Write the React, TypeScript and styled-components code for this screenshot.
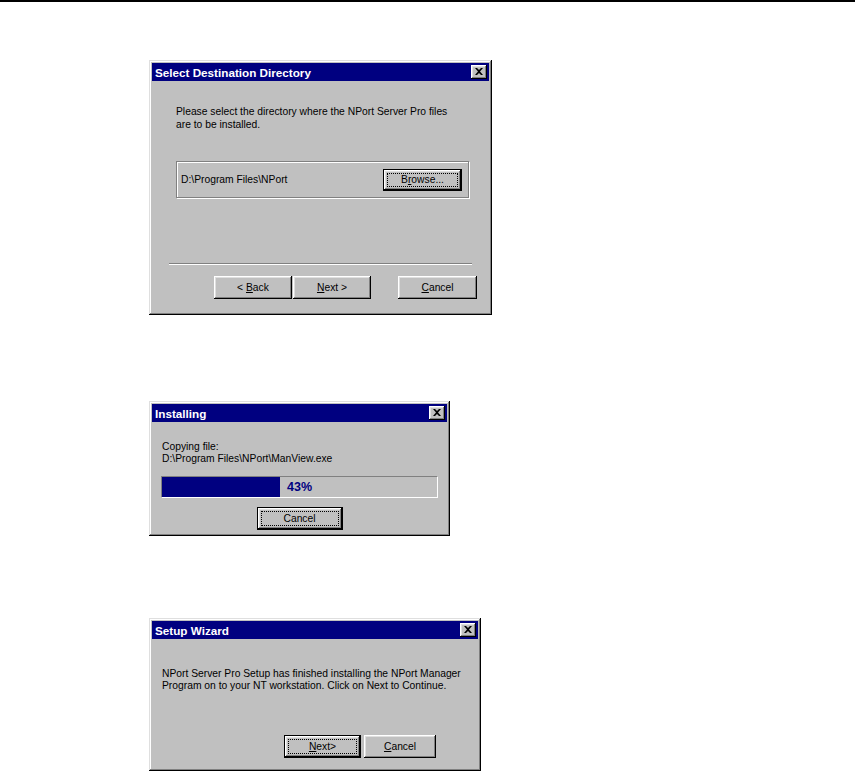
import React, { FC, ReactNode } from 'react'
import styled, { createGlobalStyle } from 'styled-components'

const GlobalStyle = createGlobalStyle`
  html, body {
    margin: 0;
    padding: 0;
    background: #fff;
  }
  body {
    font-family: 'Liberation Sans', Arial, sans-serif;
    font-size: 10.3px;
    color: #000;
  }
`

const Page = styled.div`
  width: 855px;
  height: 773px;
  overflow: hidden;
`

const TopRule = styled.div`
  height: 2px;
  background: #000;
`

const Stack = styled.div`
  display: flex;
  flex-direction: column;
  align-items: flex-start;
  padding-left: 149px;
`

const Window = styled.div<{ $w: number; $h: number; $top: number }>`
  box-sizing: border-box;
  width: ${({ $w }) => $w}px;
  height: ${({ $h }) => $h}px;
  margin-top: ${({ $top }) => $top}px;
  padding: 3px;
  background: #c0c0c0;
  box-shadow: inset -1px -1px #000, inset 1px 1px #dfdfdf, inset -2px -2px #808080, inset 2px 2px #fff;
  display: flex;
  flex-direction: column;
`

const TitleBar = styled.div`
  height: 18px;
  background: #000080;
  display: flex;
  align-items: center;
  justify-content: space-between;
  padding: 0 2px 0 3px;
`

const Title = styled.span`
  color: #fff;
  font-weight: bold;
  font-size: 11.7px;
`

const CloseBox = styled.div`
  box-sizing: border-box;
  width: 16px;
  height: 14px;
  background: #c0c0c0;
  box-shadow: inset -1px -1px #000, inset 1px 1px #fff, inset -2px -2px #808080, inset 2px 2px #dfdfdf;
  display: flex;
  align-items: center;
  justify-content: center;
  padding-bottom: 1px;
`

const Message = styled.div<{ $lh: number; $top: number; $left: number }>`
  line-height: ${({ $lh }) => $lh}px;
  margin: ${({ $top }) => $top}px 0 0 ${({ $left }) => $left}px;
  white-space: nowrap;
`

const GroupBox = styled.div`
  box-sizing: border-box;
  width: 293px;
  height: 37px;
  margin: 30px 0 0 24px;
  border: 1px solid #808080;
  box-shadow: inset 1px 1px #fff, 1px 1px #fff;
  display: flex;
  align-items: center;
  justify-content: space-between;
  padding: 0 6px 0 4px;
`

const Separator = styled.div`
  width: 303px;
  height: 0;
  margin: 65px 0 0 17px;
  border-top: 1px solid #808080;
  border-bottom: 1px solid #fff;
`

const ButtonRow = styled.div<{ $top: number; $right: number; $justify?: string }>`
  display: flex;
  justify-content: ${({ $justify }) => $justify || 'flex-end'};
  margin-top: ${({ $top }) => $top}px;
  padding-right: ${({ $right }) => $right}px;
  gap: 1px;
`

const Btn = styled.div<{ $w: number; $h?: number; $default?: boolean; $gapLeft?: number }>`
  position: relative;
  box-sizing: border-box;
  width: ${({ $w }) => $w}px;
  height: ${({ $h }) => $h || 23}px;
  margin-left: ${({ $gapLeft }) => $gapLeft || 0}px;
  background: #c0c0c0;
  display: flex;
  align-items: center;
  justify-content: center;
  box-shadow: ${({ $default }) =>
    $default
      ? 'inset -1px -1px #000, inset 1px 1px #000, inset -2px -2px #000, inset 2px 2px #fff, inset -3px -3px #808080, inset 3px 3px #dfdfdf'
      : 'inset -1px -1px #000, inset 1px 1px #fff, inset -2px -2px #808080, inset 2px 2px #dfdfdf'};

  u {
    text-decoration: underline;
    text-underline-offset: 1px;
  }
`

const FocusRing = styled.div`
  position: absolute;
  inset: 4px;
  border: 1px dotted #000;
`

const ProgressTrack = styled.div`
  position: relative;
  box-sizing: border-box;
  width: 277px;
  height: 22px;
  margin: 11px 0 0 9px;
  border-top: 1px solid #808080;
  border-left: 1px solid #808080;
  border-right: 1px solid #fff;
  border-bottom: 1px solid #fff;
`

const ProgressFill = styled.div`
  height: 100%;
  background: #000080;
`

const ProgressLabel = styled.span`
  position: absolute;
  inset: 0;
  display: flex;
  align-items: center;
  justify-content: center;
  color: #000080;
  font-weight: bold;
  font-size: 12.5px;
`

const CloseIcon: FC = () => (
  <svg width="8" height="7" viewBox="0 0 8 7">
    <path d="M0 0h2l2 2 2-2h2L5 3.5 8 7H6L4 5 2 7H0l3-3.5z" fill="#000" />
  </svg>
)

interface DialogProps {
  title: string
  w: number
  h: number
  top: number
  children: ReactNode
}

const Dialog: FC<DialogProps> = ({ title, w, h, top, children }) => (
  <Window $w={w} $h={h} $top={top}>
    <TitleBar>
      <Title>{title}</Title>
      <CloseBox>
        <CloseIcon />
      </CloseBox>
    </TitleBar>
    {children}
  </Window>
)

const App: FC = () => {
  const percent = 43
  return (
    <Page>
      <GlobalStyle />
      <TopRule />
      <Stack>
        <Dialog title="Select Destination Directory" w={343} h={255} top={58}>
          <Message $lh={13} $top={24} $left={24}>
            Please select the directory where the NPort Server Pro files
            <br />
            are to be installed.
          </Message>
          <GroupBox>
            <span>D:\Program Files\NPort</span>
            <Btn $w={79} $h={22} $default>
              <FocusRing />
              <span>
                B<u>r</u>owse...
              </span>
            </Btn>
          </GroupBox>
          <Separator />
          <ButtonRow $top={11} $right={12}>
            <Btn $w={78}>
              <span>
                &lt; <u>B</u>ack
              </span>
            </Btn>
            <Btn $w={78}>
              <span>
                <u>N</u>ext &gt;
              </span>
            </Btn>
            <Btn $w={79} $gapLeft={26}>
              <span>
                <u>C</u>ancel
              </span>
            </Btn>
          </ButtonRow>
        </Dialog>

        <Dialog title="Installing" w={301} h={135} top={86}>
          <Message $lh={12} $top={19} $left={10}>
            Copying file:
            <br />
            D:\Program Files\NPort\ManView.exe
          </Message>
          <ProgressTrack>
            <ProgressFill style={{ width: `${percent}%` }} />
            <ProgressLabel>{percent}%</ProgressLabel>
          </ProgressTrack>
          <ButtonRow $top={9} $right={0} $justify="center">
            <Btn $w={86} $default>
              <FocusRing />
              <span>Cancel</span>
            </Btn>
          </ButtonRow>
        </Dialog>

        <Dialog title="Setup Wizard" w={332} h={153} top={82}>
          <Message $lh={12} $top={29} $left={10}>
            NPort Server Pro Setup has finished installing the NPort Manager
            <br />
            Program on to your NT workstation. Click on Next to Continue.
          </Message>
          <ButtonRow $top={43} $right={42}>
            <Btn $w={77} $default>
              <FocusRing />
              <span>
                <u>N</u>ext&gt;
              </span>
            </Btn>
            <Btn $w={72} $gapLeft={2}>
              <span>
                <u>C</u>ancel
              </span>
            </Btn>
          </ButtonRow>
        </Dialog>
      </Stack>
    </Page>
  )
}

export default App
